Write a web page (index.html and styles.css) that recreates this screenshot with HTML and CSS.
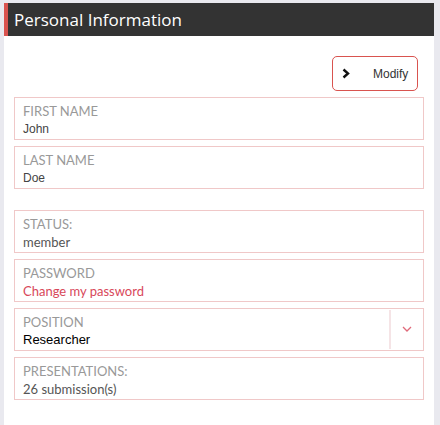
FILE: index.html
```html
<!DOCTYPE html>
<html>
<head>
<meta charset="utf-8">
<link rel="stylesheet" href="styles.css">
</head>
<body>
<div class="card">
  <div class="header">Personal Information</div>
  <div class="content">
    <div class="actions">
      <button class="btn-modify">
        <svg class="chev" width="9" height="11" viewBox="0 0 9 11"><path d="M1.5 1.5 L6 5.5 L1.5 9.5" fill="none" stroke="#111" stroke-width="2.4"/></svg>
        <span>Modify</span>
      </button>
    </div>
    <div class="group">
      <div class="field"><div class="label">FIRST NAME</div><div class="value">John</div></div>
      <div class="field"><div class="label">LAST NAME</div><div class="value">Doe</div></div>
    </div>
    <div class="group group2">
      <div class="field"><div class="label">STATUS:</div><div class="value lato">member</div></div>
      <div class="field"><div class="label">PASSWORD</div><div class="value link">Change my password</div></div>
      <div class="field select">
        <div class="sel-main"><div class="label">POSITION</div><div class="value dark">Researcher</div></div>
        <div class="sel-arrow"><svg width="10" height="7" viewBox="0 0 10 7"><path d="M1 1 L5 5 L9 1" fill="none" stroke="#e06a7a" stroke-width="1.3"/></svg></div>
      </div>
      <div class="field"><div class="label">PRESENTATIONS:</div><div class="value lato">26 submission(s)</div></div>
    </div>
  </div>
</div>
</body>
</html>
```
FILE: styles.css
```css
html, body {
  margin: 0;
  padding: 0;
}
body {
  background: #e9e9ef;
  font-family: "Lato", "Liberation Sans", sans-serif;
  height: 425px;
  overflow: hidden;
}
.card {
  margin: 3px 6px 0 4px;
  background: #fff;
  height: 422px;
}
.header {
  height: 33px;
  background: #333333;
  border-left: 4px solid #d9534f;
  padding-left: 6px;
  color: #fff;
  font-family: "Open Sans", sans-serif;
  font-size: 17px;
  line-height: 33px;
}
.content {
  padding: 20px 10px 0 10px;
}
.actions {
  display: flex;
  justify-content: flex-end;
  padding-right: 6px;
}
.btn-modify {
  width: 86px;
  height: 35px;
  border: 1px solid #d9534f;
  border-radius: 5px;
  background: #fff;
  display: flex;
  align-items: center;
  padding: 0 0 0 9px;
  font-family: "Liberation Sans", Arial, sans-serif;
  font-size: 12px;
  color: #333;
  box-sizing: border-box;
}
.btn-modify span {
  margin-left: 22px;
}
.group {
  display: flex;
  flex-direction: column;
  gap: 6px;
  margin-top: 6px;
}
.group2 {
  margin-top: 21px;
}
.field {
  border: 1px solid #f0c8c8;
  height: 43px;
  box-sizing: border-box;
  padding: 5px 8px 0 8px;
}
.label {
  font-family: "Lato", sans-serif;
  font-size: 13px;
  color: #999;
  line-height: 17px;
}
.value {
  font-family: "Liberation Sans", Arial, sans-serif;
  font-size: 12px;
  color: #444;
  line-height: 18px;
}
.value.lato {
  font-family: "Lato", sans-serif;
  font-size: 13px;
  color: #555;
}
.value.link {
  font-family: "Lato", sans-serif;
  font-size: 13px;
  color: #d8485a;
}
.value.dark {
  color: #000;
  font-size: 13px;
}
.field.select {
  display: flex;
  padding: 0;
}
.sel-main {
  flex: 1;
  padding: 5px 8px 0 8px;
}
.sel-arrow {
  width: 32px;
  border-left: 2px solid #f5e4e6;
  margin: 1px 0;
  display: flex;
  align-items: center;
  justify-content: center;
}
```
